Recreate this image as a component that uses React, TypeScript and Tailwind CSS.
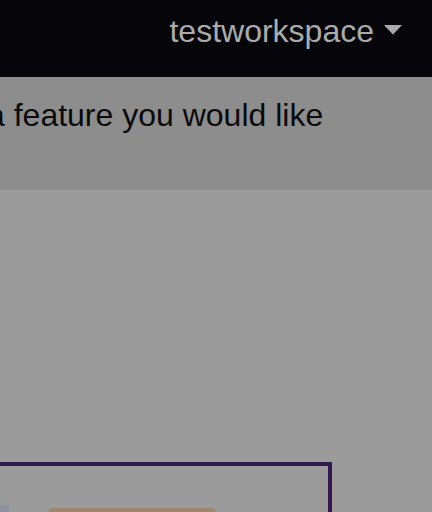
import React from "react";

export default function App() {
  return (
    <div
      className="w-[432px] h-[512px] overflow-hidden bg-[#9b9b9b] flex flex-col"
      style={{ fontFamily: '"Liberation Sans", Arial, sans-serif' }}
    >
      <div className="h-[77px] shrink-0 bg-[#060509] flex justify-end items-start pt-[13px] pr-[30px]">
        <div className="flex items-center gap-[10px]">
          <span className="text-[32px] leading-[36px] text-[#ababab]">testworkspace</span>
          <svg width="18" height="10" viewBox="0 0 18 10" className="mt-[-2px]">
            <polygon points="0,0 18,0 9,9.5" fill="#ababab" />
          </svg>
        </div>
      </div>
      <div className="h-[113px] shrink-0 bg-[#8d8d8d] pt-[20px]">
        <p className="ml-[-13px] whitespace-nowrap text-[32px] leading-[36px] text-[#0a0a0a]">
          a feature you would like
        </p>
      </div>
      <div className="flex-1 pt-[272px]">
        <div className="ml-[-20px] w-[352px] h-[200px] border-[4px] border-[#32184d] flex items-start gap-[20px] pt-[39px]">
          <div className="mt-[0px] ml-[16px] w-[9px] h-[20px] bg-[#8e909e]" />
          <div className="mt-[3px] ml-[19px] w-[168px] h-[30px] rounded-t-[5px] bg-[#9c8670]" />
        </div>
      </div>
    </div>
  );
}
